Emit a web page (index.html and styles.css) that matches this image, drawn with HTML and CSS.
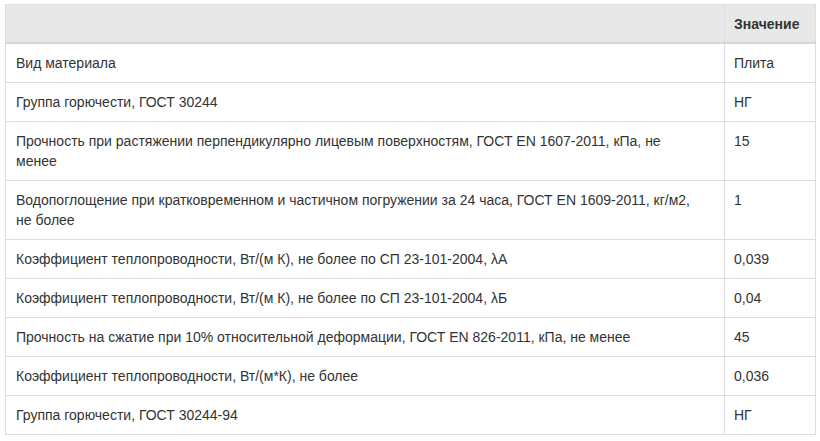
FILE: index.html
```html
<!DOCTYPE html>
<html lang="ru">
<head>
<meta charset="utf-8">
<link rel="stylesheet" href="styles.css">
</head>
<body>
<table class="props">
  <colgroup><col class="c-name"><col class="c-val"></colgroup>
  <thead>
    <tr><th></th><th>Значение</th></tr>
  </thead>
  <tbody>
    <tr><td>Вид материала</td><td>Плита</td></tr>
    <tr><td>Группа горючести, ГОСТ 30244</td><td>НГ</td></tr>
    <tr><td>Прочность при растяжении перпендикулярно лицевым поверхностям, ГОСТ EN 1607-2011, кПа, не менее</td><td>15</td></tr>
    <tr><td>Водопоглощение при кратковременном и частичном погружении за 24 часа, ГОСТ EN 1609-2011, кг/м2, не более</td><td>1</td></tr>
    <tr><td>Коэффициент теплопроводности, Вт/(м К), не более по СП 23-101-2004, λА</td><td>0,039</td></tr>
    <tr><td>Коэффициент теплопроводности, Вт/(м К), не более по СП 23-101-2004, λБ</td><td>0,04</td></tr>
    <tr><td>Прочность на сжатие при 10% относительной деформации, ГОСТ EN 826-2011, кПа, не менее</td><td>45</td></tr>
    <tr><td>Коэффициент теплопроводности, Вт/(м*К), не более</td><td>0,036</td></tr>
    <tr><td>Группа горючести, ГОСТ 30244-94</td><td>НГ</td></tr>
  </tbody>
</table>
</body>
</html>
```
FILE: styles.css
```css
html, body {
  margin: 0;
  background: #fff;
}
body {
  padding: 4px 5px;
  font-family: "Liberation Sans", Arial, sans-serif;
  font-size: 14px;
  line-height: 20px;
  color: #333;
}
.props {
  width: 810px;
  border-collapse: collapse;
  table-layout: fixed;
  border: 1px solid #ddd;
}
.c-name { width: 719px; }
.c-val { width: 91px; }
.props th, .props td {
  border: 1px solid #ddd;
  padding: 9px;
  text-align: left;
  vertical-align: top;
}
.props td:first-child, .props th:first-child {
  padding-left: 10px;
  padding-right: 20px;
}
.props thead th {
  background: #e8e8e8;
  font-weight: bold;
  border-bottom: 2px solid #d6d6d6;
  height: 20px;
  padding-top: 9px;
  padding-bottom: 8px;
}
```
